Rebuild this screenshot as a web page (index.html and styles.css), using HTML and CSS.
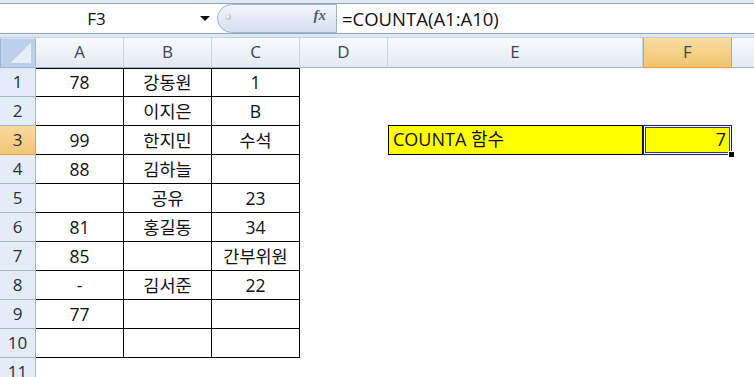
FILE: index.html
```html
<!DOCTYPE html>
<html lang="ko">
<head>
  <meta charset="UTF-8">
  <title>COUNTA 함수</title>
  <link rel="stylesheet" href="styles.css">
</head>
<body>
  <div class="toolbar">
    <div class="formula-bar">
      <div class="name-box">F3<span class="arrow"></span></div>
      <div class="fx-capsule"><span class="dot"></span><span class="fx">fx</span></div>
      <div class="formula">=COUNTA(A1:A10)</div>
    </div>
  </div>

  <div class="sheet">
    <div class="row col-heads">
      <div class="corner"><span class="tri"></span></div>
      <div class="col-head">A</div>
      <div class="col-head">B</div>
      <div class="col-head">C</div>
      <div class="col-head">D</div>
      <div class="col-head">E</div>
      <div class="col-head active">F</div>
      <div class="col-head last"></div>
    </div>

    <div class="row">
      <div class="row-head">1</div>
      <div class="cell box top">78</div><div class="cell box top">강동원</div><div class="cell box top">1</div>
      <div class="cell"></div><div class="cell"></div><div class="cell"></div><div class="cell"></div>
    </div>
    <div class="row">
      <div class="row-head">2</div>
      <div class="cell box"></div><div class="cell box">이지은</div><div class="cell box">B</div>
      <div class="cell"></div><div class="cell"></div><div class="cell"></div><div class="cell"></div>
    </div>
    <div class="row">
      <div class="row-head active">3</div>
      <div class="cell box">99</div><div class="cell box">한지민</div><div class="cell box">수석</div>
      <div class="cell"></div>
      <div class="cell label">COUNTA 함수</div>
      <div class="cell result">7<span class="handle"></span></div>
      <div class="cell"></div>
    </div>
    <div class="row">
      <div class="row-head">4</div>
      <div class="cell box">88</div><div class="cell box">김하늘</div><div class="cell box"></div>
      <div class="cell"></div><div class="cell"></div><div class="cell"></div><div class="cell"></div>
    </div>
    <div class="row">
      <div class="row-head">5</div>
      <div class="cell box"></div><div class="cell box">공유</div><div class="cell box">23</div>
      <div class="cell"></div><div class="cell"></div><div class="cell"></div><div class="cell"></div>
    </div>
    <div class="row">
      <div class="row-head">6</div>
      <div class="cell box">81</div><div class="cell box">홍길동</div><div class="cell box">34</div>
      <div class="cell"></div><div class="cell"></div><div class="cell"></div><div class="cell"></div>
    </div>
    <div class="row">
      <div class="row-head">7</div>
      <div class="cell box">85</div><div class="cell box"></div><div class="cell box">간부위원</div>
      <div class="cell"></div><div class="cell"></div><div class="cell"></div><div class="cell"></div>
    </div>
    <div class="row">
      <div class="row-head">8</div>
      <div class="cell box">-</div><div class="cell box">김서준</div><div class="cell box">22</div>
      <div class="cell"></div><div class="cell"></div><div class="cell"></div><div class="cell"></div>
    </div>
    <div class="row">
      <div class="row-head">9</div>
      <div class="cell box">77</div><div class="cell box"></div><div class="cell box"></div>
      <div class="cell"></div><div class="cell"></div><div class="cell"></div><div class="cell"></div>
    </div>
    <div class="row">
      <div class="row-head">10</div>
      <div class="cell box"></div><div class="cell box"></div><div class="cell box"></div>
      <div class="cell"></div><div class="cell"></div><div class="cell"></div><div class="cell"></div>
    </div>
    <div class="row">
      <div class="row-head">11</div>
      <div class="cell"></div><div class="cell"></div><div class="cell"></div>
      <div class="cell"></div><div class="cell"></div><div class="cell"></div><div class="cell"></div>
    </div>
  </div>
</body>
</html>
```

FILE: styles.css
```css
html, body {
  margin: 0;
  padding: 0;
  height: 100%;
  overflow: hidden;
}
body {
  background: #fff;
  font-family: "Open Sans", "Noto Sans CJK KR", sans-serif;
  color: #111;
}

/* formula bar */
.toolbar {
  background: #dfe8f5;
  padding: 3px 0 3px 0;
  border-bottom: 1px solid #c3d1e4;
}
.formula-bar {
  display: flex;
  height: 29px;
  background: #fff;
  border-top: 1px solid #8fa5c2;
  border-bottom: 1px solid #8fa5c2;
}
.name-box {
  position: relative;
  width: 217px;
  box-sizing: border-box;
  text-align: center;
  font-size: 17px;
  line-height: 29px;
  padding-right: 24px;
}
.arrow {
  position: absolute;
  right: 7px;
  top: 12px;
  border-left: 5px solid transparent;
  border-right: 5px solid transparent;
  border-top: 5px solid #111;
}
.fx-capsule {
  position: relative;
  width: 120px;
  box-sizing: border-box;
  height: 29px;
  border: 1px solid #9fb3cf;
  border-radius: 15px 0 0 15px;
  background: linear-gradient(#f1f5fb, #d5e1f1);
}
.dot {
  position: absolute;
  left: 7px;
  top: 9px;
  width: 6px;
  height: 6px;
  border-radius: 50%;
  background: radial-gradient(circle at 40% 40%, #fff, #9aa3ad);
}
.fx {
  position: absolute;
  right: 10px;
  top: 2px;
  font-family: "Liberation Serif", serif;
  font-style: italic;
  font-weight: bold;
  font-size: 15px;
  color: #555f6c;
}
.formula {
  flex: 1;
  padding-left: 5px;
  font-size: 18.5px;
  line-height: 29px;
}

/* grid */
.row {
  display: grid;
  grid-template-columns: 36px 88px 88px 88px 88px 255px 89px 1fr;
  height: 29px;
}
.col-heads {
  height: 30px;
}
.col-head, .corner {
  box-sizing: border-box;
  background: linear-gradient(#f8fafd, #e4eaf3);
  border-right: 1px solid #c5d2e3;
  border-bottom: 1px solid #9eb6ce;
  text-align: center;
  font-size: 17px;
  line-height: 28px;
  color: #3b4656;
}
.col-head.active {
  background: linear-gradient(#f9dca6, #f2c46c);
  border: 1px solid #f29b3e;
  border-top: none;
}
.col-head.last {
  border-right: none;
}
.corner {
  position: relative;
  background: #bcd0ea;
  border: 1px solid #9eb6ce;
  border-top: 1px solid #dbe5f2;
}
.tri {
  position: absolute;
  right: 4px;
  bottom: 4px;
  width: 20px;
  height: 20px;
  background: linear-gradient(to bottom right, transparent 50%, #e6eef8 50%);
}
.row-head {
  box-sizing: border-box;
  background: #e4ecf7;
  border-right: 1px solid #9eb6ce;
  border-bottom: 1px solid #9eb6ce;
  text-align: center;
  font-size: 17px;
  line-height: 28px;
  color: #27313e;
}
.row-head.active {
  background: linear-gradient(#f9d89e, #f3c676);
  border-right-color: #f29b3e;
  border-bottom-color: #f29b3e;
}
.cell {
  box-sizing: border-box;
  font-size: 17.5px;
  line-height: 28px;
  text-align: center;
  white-space: nowrap;
}
.cell.box {
  border-right: 1px solid #000;
  border-bottom: 1px solid #000;
}
.cell.box.top {
  border-top: 1px solid #000;
  line-height: 27px;
}
.cell.label {
  background: #ffff00;
  border: 1px solid #000;
  text-align: left;
  padding-left: 4px;
  font-size: 18px;
  line-height: 26px;
  margin-top: -1px;
  height: 30px;
}
.cell.result {
  position: relative;
  background: #ffff00;
  border: 1px solid #1c1f55;
  box-shadow: inset 0 0 0 1px #fff, inset 0 0 0 2px #2d3c84;
  text-align: right;
  padding-right: 5px;
  font-size: 18px;
  line-height: 26px;
  margin-top: -1px;
  height: 30px;
}
.handle {
  position: absolute;
  right: -4px;
  bottom: -4px;
  width: 5px;
  height: 5px;
  background: #000;
  border: 1px solid #fff;
}
```
